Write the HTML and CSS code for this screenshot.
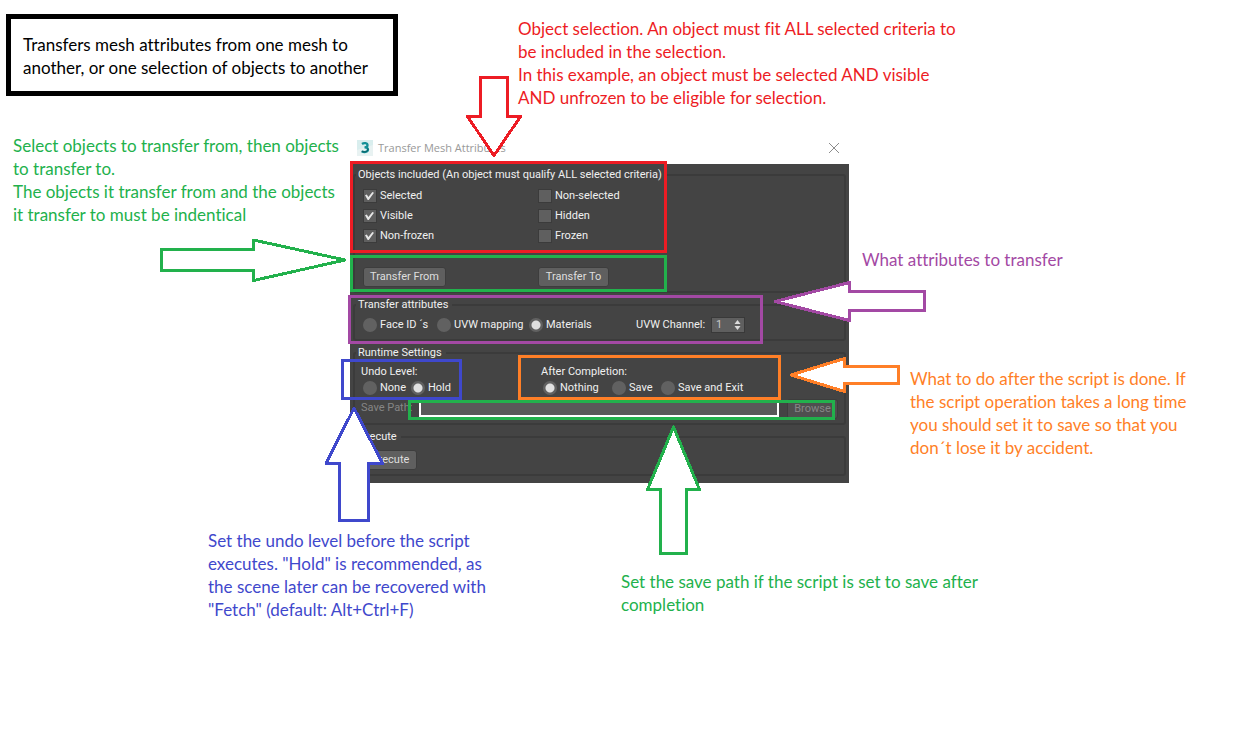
FILE: index.html
```
<!DOCTYPE html>
<html lang="en">
<head>
<meta charset="utf-8">
<title>Transfer Mesh Attributes</title>
<link rel="stylesheet" href="styles.css">
</head>
<body>
<main class="canvas">
  <p class="note note-intro">Transfers mesh attributes from one mesh to<br>another, or one selection of objects to another</p>
  <p class="note note-selection">Object selection. An object must fit ALL selected criteria to<br>be included in the selection.<br>In this example, an object must be selected AND visible<br>AND unfrozen to be eligible for selection.</p>
  <p class="note note-transfer">Select objects to transfer from, then objects<br>to transfer to.<br>The objects it transfer from and the objects<br>it transfer to must be indentical</p>
  <p class="note note-attributes">What attributes to transfer</p>
  <p class="note note-completion">What to do after the script is done. If<br>the script operation takes a long time<br>you should set it to save so that you<br>don´t lose it by accident.</p>
  <p class="note note-undo">Set the undo level before the script<br>executes. "Hold" is recommended, as<br>the scene later can be recovered with<br>"Fetch" (default: Alt+Ctrl+F)</p>
  <p class="note note-path">Set the save path if the script is set to save after<br>completion</p>

  <section class="dialog">
    <header class="titlebar">
      <svg class="app-icon" width="16" height="16" viewBox="0 0 16 16" aria-hidden="true">
        <rect width="16" height="16" fill="#d9eeee"/>
        <path d="M0 10L16 5V16H0Z" fill="#e8f2f2"/>
        <path d="M5 4C7 2.500 10.500 3 10.500 5.200C10.500 6.800 9 7.300 7.500 7.300C9.500 7.300 11 8 11 9.600C11 12.300 7 12.600 4.700 11.200" fill="none" stroke="#128f96" stroke-width="2.300"/>
        <path d="M10.800 8.500C11.500 11.500 8 12.700 4.700 11.400" fill="none" stroke="#0b5960" stroke-width="1"/>
      </svg>
      <h1 class="title">Transfer Mesh Attributes</h1>
      <button class="close" type="button" aria-label="Close">
        <svg width="12" height="12" viewBox="0 0 12 12"><path d="M1 1L11 11M11 1L1 11" stroke="#8c8c8c" fill="none"/></svg>
      </button>
    </header>
    <form class="body">
      <fieldset class="group">
        <legend>Objects included (An object must qualify ALL selected criteria)</legend>
        <div class="criteria">
          <label class="option"><input type="checkbox" checked>Selected</label>
          <label class="option"><input type="checkbox">Non-selected</label>
          <label class="option"><input type="checkbox" checked>Visible</label>
          <label class="option"><input type="checkbox">Hidden</label>
          <label class="option"><input type="checkbox" checked>Non-frozen</label>
          <label class="option"><input type="checkbox">Frozen</label>
        </div>
        <div class="transfer">
          <div><button class="btn btn-from" type="button">Transfer From</button></div>
          <div><button class="btn btn-to" type="button">Transfer To</button></div>
        </div>
      </fieldset>
      <fieldset class="group">
        <legend>Transfer attributes</legend>
        <div class="attributes">
          <label class="option"><input type="radio" name="attr">Face ID ´s</label>
          <label class="option"><input type="radio" name="attr">UVW mapping</label>
          <label class="option"><input type="radio" name="attr" checked>Materials</label>
          <div class="channel">
            <label for="channel">UVW Channel:</label>
            <span class="spinner">
              <input id="channel" type="text" value="1">
              <svg width="7" height="10" viewBox="0 0 7 10" aria-hidden="true"><path d="M3.500 0L6.500 4H.5ZM3.500 10L6.500 6H.5Z" fill="#dcdcdc"/></svg>
            </span>
          </div>
        </div>
      </fieldset>
      <fieldset class="group">
        <legend>Runtime Settings</legend>
        <div class="runtime">
          <div class="choice">
            <span class="caption">Undo Level:</span>
            <div class="undo">
              <label class="option"><input type="radio" name="undo">None</label>
              <label class="option"><input type="radio" name="undo" checked>Hold</label>
            </div>
          </div>
          <div class="choice">
            <span class="caption">After Completion:</span>
            <div class="completion">
              <label class="option"><input type="radio" name="after" checked>Nothing</label>
              <label class="option"><input type="radio" name="after">Save</label>
              <label class="option"><input type="radio" name="after">Save and Exit</label>
            </div>
          </div>
        </div>
        <div class="path">
          <label for="path">Save Path:</label>
          <input id="path" type="text" disabled>
          <button class="btn" type="button" disabled>Browse</button>
        </div>
      </fieldset>
      <fieldset class="group">
        <legend>Execute</legend>
        <button class="btn btn-execute" type="button">Execute</button>
      </fieldset>
    </form>
  </section>

  <svg class="marks" width="1000" height="560" viewBox="0 0 1000 560" aria-hidden="true">
    <g class="frames">
      <rect class="red" x="351.500" y="162.500" width="314" height="89"/>
      <rect class="green" x="351.500" y="256.500" width="314" height="34"/>
      <rect class="purple" x="349.500" y="296.500" width="412" height="46"/>
      <rect class="blue" x="342.500" y="360.500" width="118" height="38"/>
      <rect class="orange" x="519.500" y="356.500" width="260" height="42"/>
      <rect class="green" x="409.500" y="401.500" width="424" height="17"/>
    </g>
    <g class="arrows">
      <path class="red" d="M480.500 77.500H507.500V116.500H520.500L494 155.500L467.500 116.500H480.500Z"/>
      <path class="green" d="M161.500 249.500H253.500V240L345 260L253.500 280.500V270.500H161.500Z"/>
      <path class="purple" d="M924.500 291.500H849.500V282.500L775 301.500L849.500 320.500V310.500H924.500Z"/>
      <path class="orange" d="M898.500 366.500H844.500V358.500L791 375L844.500 391.500V383.500H898.500Z"/>
      <path class="blue" d="M339.500 520.500V463.500H326L354 408L382.500 463.500H368.500V520.500Z"/>
      <path class="green" d="M660.500 553.500V489.500H647.500L673.500 427L699.500 489.500H686.500V553.500Z"/>
    </g>
  </svg>
</main>
</body>
</html>
```
FILE: styles.css
```
* { box-sizing: border-box; }
body { margin: 0; background: #fff; }
.canvas { position: relative; min-height: 100vh; }

/* Notes pinned around the dialog */
.note {
  position: absolute;
  margin: 0;
  font: 17px/23px Lato, sans-serif;
  font-variant-ligatures: none;
  white-space: nowrap;
}
.note-intro { left: 6px; top: 14px; min-width: 392px; padding: 14px 12px 12px; border: 5px solid #000; color: #000; }
.note-selection { left: 518px; top: 17px; color: #ed1c24; }
.note-transfer { left: 13px; top: 134px; color: #22b14c; }
.note-attributes { left: 862px; top: 248px; color: #a349a4; }
.note-completion { left: 910px; top: 367px; color: #ff7f27; }
.note-undo { left: 208px; top: 529px; color: #3f48cc; }
.note-path { left: 621px; top: 570px; color: #22b14c; }

/* Dialog window */
.dialog {
  position: absolute;
  left: 350px;
  top: 132px;
  width: 499px;
  font: 11px/14px Roboto, sans-serif;
  color: #f0f0f0;
}
.titlebar { display: flex; align-items: center; height: 32px; padding: 0 8px 0 7px; gap: 5px; }
.title { flex: 1; margin: 0; font: 11px/16px "Open Sans", sans-serif; color: #999; }
.close { display: flex; padding: 1px; border: 0; background: none; }
.body { display: flex; flex-direction: column; gap: 5px; margin: 0; padding: 4px 3px 7px; background: #444; }
.group { min-width: 0; margin: 0; padding: 4px 6px 4px 8px; border: 2px solid #3b3b3b; border-radius: 3px; }
.group legend { margin-left: -7px; padding: 0 4px 0 2px; }

.option { display: flex; align-items: center; gap: 3px; white-space: nowrap; }
input { margin: 0; font: inherit; color: inherit; }
input[type="checkbox"], input[type="radio"] { appearance: none; flex: none; width: 14px; height: 14px; border: 1px solid #3b3b3b; background: #5f5f5f; }
input[type="radio"] { border: 0; border-radius: 50%; background: #616161; }
input[type="radio"]:checked { background: radial-gradient(circle, #e0e0e0 4px, #616161 5px); }
input[type="checkbox"]:checked::before {
  content: "";
  display: block;
  width: 9px;
  height: 8px;
  margin: 2px 1px;
  background: #e6e6e6;
  clip-path: polygon(0 40%, 20% 32%, 38% 62%, 82% 0, 100% 8%, 42% 100%, 30% 100%);
}
.btn { height: 20px; padding: 0; border: 1px solid #3d3d3d; border-radius: 3px; background: #5f5f5f; font: inherit; color: #dedede; white-space: nowrap; }
.btn:disabled { background: #4f4f4f; color: #868686; }
.btn-from { width: 83px; }
.btn-to { width: 71px; }
.btn-execute { display: block; width: 54px; margin-top: 2px; }

.criteria, .transfer { display: grid; grid-template-columns: 175px 1fr; }
.criteria { grid-auto-rows: 20px; }
.transfer { margin-top: 21px; }
.transfer .btn { display: block; }
.attributes { display: grid; grid-template-columns: 74px 92px 107px 1fr; align-items: center; height: 18px; margin-bottom: 1px; }
.channel { display: flex; align-items: center; gap: 5px; white-space: nowrap; }
.channel label { min-width: 70px; }
.spinner { display: flex; align-items: center; width: 34px; height: 16px; padding: 0 3px 0 4px; border: 1px solid #393939; background: #5f5f5f; color: #c8c8c8; }
.spinner input { flex: 1; min-width: 0; padding: 0; border: 0; background: none; }
.runtime { display: grid; grid-template-columns: 180px 1fr; }
.caption { display: block; margin-left: -2px; line-height: 16px; }
.undo { display: grid; grid-template-columns: 48px auto; grid-auto-rows: 16px; }
.completion { display: grid; grid-template-columns: 69px 49px auto; grid-auto-rows: 16px; }
.path { display: flex; align-items: center; gap: 8px; margin: 3px 0 0 -2px; color: #868686; }
.path label { width: 50px; margin-bottom: 2px; white-space: nowrap; }
.path input { flex: 1; min-width: 0; height: 16px; border: 2px solid #fff; border-top: 0; background: #595959; }
.path .btn { width: 51px; }

/* Frames and arrows drawn over the dialog */
.marks { position: absolute; left: 0; top: 0; pointer-events: none; shape-rendering: crispEdges; stroke-width: 3px; }
.frames { fill: none; }
.arrows { fill: #fff; stroke-linejoin: round; }
.red { stroke: #ed1c24; }
.green { stroke: #22b14c; }
.purple { stroke: #a349a4; }
.blue { stroke: #3f48cc; }
.orange { stroke: #ff7f27; }
```
